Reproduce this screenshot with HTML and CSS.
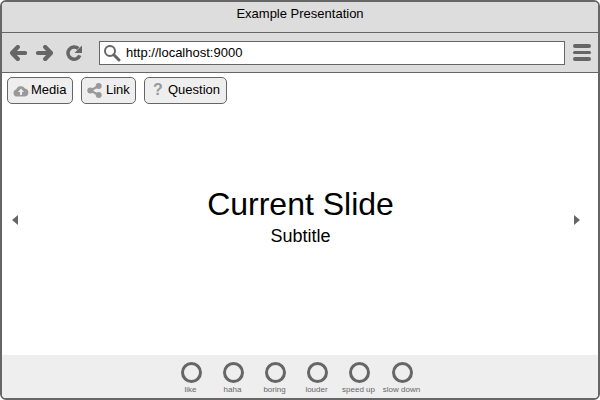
FILE: index.html
```html
<!DOCTYPE html>
<html lang="en">
<head>
  <meta charset="UTF-8" />
  <title>Example Presentation</title>
  <link rel="stylesheet" href="styles.css">
</head>
<body>

  <div class="window">
    <div class="titlebar">Example Presentation</div>

    <div class="toolbar">
      <svg class="nav-icon" width="17" height="16" viewBox="0 0 17 16">
        <path d="M7.8 2 2 8l5.8 6M2.5 8H15" fill="none" stroke="#666" stroke-width="4.2" stroke-linejoin="round" stroke-linecap="round"/>
      </svg>
      <svg class="nav-icon" width="17" height="16" viewBox="0 0 17 16">
        <path d="M9.2 2 15 8l-5.8 6M14.5 8H2" fill="none" stroke="#666" stroke-width="4.2" stroke-linejoin="round" stroke-linecap="round"/>
      </svg>
      <svg class="nav-icon reload" width="16" height="16" viewBox="0 0 16 16">
        <path d="M13.8 10.3A6.1 6.1 0 1 1 12.3 3.6" fill="none" stroke="#666" stroke-width="3.5"/>
        <path d="M16 0.5V8H8.5z" fill="#666"/>
      </svg>
      <div class="address">
        <svg width="18" height="18" viewBox="0 0 18 18">
          <circle cx="7" cy="7" r="5" fill="none" stroke="#666" stroke-width="2"/>
          <path d="M10.8 10.8 16 16" stroke="#666" stroke-width="3" stroke-linecap="round"/>
        </svg>
        <span>http://localhost:9000</span>
      </div>
      <div class="menu">
        <span></span>
        <span></span>
        <span></span>
      </div>
    </div>

    <div class="actions">
      <button class="media">
        <svg width="16" height="13" viewBox="0 0 16 13">
          <path d="M4 12.5a3.5 3.5 0 0 1-.8-6.9A4.8 4.8 0 0 1 12 4.6a4 4 0 0 1 0 7.9z" fill="#999"/>
          <path d="M8 4.5 11 8H9v3H7V8H5z" fill="#eee"/>
        </svg>
        <span>Media</span>
      </button>
      <button class="link">
        <svg width="15" height="15" viewBox="0 0 15 15">
          <path d="M11.5 3 3.5 7.5l8 4.5" fill="none" stroke="#999" stroke-width="2.2"/>
          <circle cx="11.7" cy="3" r="3" fill="#999"/>
          <circle cx="3.3" cy="7.5" r="3" fill="#999"/>
          <circle cx="11.7" cy="12" r="3" fill="#999"/>
        </svg>
        <span>Link</span>
      </button>
      <button class="question"><b>?</b><span>Question</span></button>
    </div>

    <div class="stage">
      <div class="arrow-left"></div>
      <div class="slide">
        <h1>Current Slide</h1>
        <h2>Subtitle</h2>
      </div>
      <div class="arrow-right"></div>
    </div>

    <div class="reactions">
      <div class="reaction"><i></i>like</div>
      <div class="reaction"><i></i>haha</div>
      <div class="reaction"><i></i>boring</div>
      <div class="reaction"><i></i>louder</div>
      <div class="reaction"><i></i>speed up</div>
      <div class="reaction last"><i></i>slow down</div>
    </div>
  </div>

</body>
</html>
```

FILE: styles.css
```css
html, body {
  margin: 0;
  padding: 0;
  background: #fff;
  font-family: 'Liberation Sans', Arial, sans-serif;
  overflow: hidden;
}

.window {
  width: 600px;
  height: 400px;
  box-sizing: border-box;
  border: 2px solid #666;
  border-radius: 6px;
  display: flex;
  flex-direction: column;
  overflow: hidden;
}

.titlebar {
  height: 30px;
  background: #ddd;
  border-bottom: 1px solid #666;
  line-height: 23px;
  text-align: center;
  font-size: 13px;
  color: #000;
}

.toolbar {
  height: 39px;
  background: #ddd;
  border-bottom: 1px solid #666;
  display: flex;
  align-items: center;
  padding-left: 8px;
}

.nav-icon {
  margin-right: 9px;
  flex: none;
}

.nav-icon.reload {
  margin-left: 4px;
  margin-right: 17px;
}

.address {
  width: 461px;
  height: 22px;
  background: #fff;
  border: 1px solid #666;
  display: flex;
  align-items: center;
  gap: 5px;
  padding-left: 3px;
  font-size: 13px;
  color: #000;
}

.menu {
  margin-left: 8px;
  display: flex;
  flex-direction: column;
  gap: 3px;
}

.menu span {
  display: block;
  width: 18px;
  height: 3.5px;
  border-radius: 2px;
  background: #666;
}

.actions {
  display: flex;
  gap: 8px;
  padding: 4px 5px 0;
  height: 27px;
}

button {
  height: 27px;
  box-sizing: border-box;
  background: #eee;
  border: 1px solid #666;
  border-radius: 5px;
  font-family: inherit;
  font-size: 13px;
  color: #000;
  display: flex;
  align-items: center;
  gap: 2px;
  padding: 0 5px 3px;
}

button svg {
  margin-top: 2px;
}

button b {
  color: #999;
  font-size: 16px;
  width: 16px;
  margin-top: 2px;
  text-align: center;
}

.media { width: 66px; }
.link { width: 55px; gap: 4px; }
.question { width: 83px; padding-left: 5px; }

.stage {
  flex: 1;
  display: grid;
  grid-template-columns: 1fr auto 1fr;
  align-items: center;
  padding: 0 18px 20px 10px;
  background: #fff;
}

.arrow-left {
  justify-self: start;
  border-style: solid;
  border-width: 5px 6px 5px 0;
  border-color: transparent #666 transparent transparent;
}

.arrow-right {
  justify-self: end;
  border-style: solid;
  border-width: 5px 0 5px 6px;
  border-color: transparent transparent transparent #666;
}

.slide {
  text-align: center;
  color: #000;
  margin-left: 9px;
  margin-bottom: 4px;
}

.slide h1 {
  margin: 0;
  font-size: 32px;
  font-weight: normal;
  line-height: 37px;
}

.slide h2 {
  margin: 0;
  font-size: 18px;
  font-weight: normal;
  line-height: 26px;
}

.reactions {
  height: 43px;
  background: #eee;
  display: flex;
  justify-content: center;
  padding-right: 6px;
}

.reaction {
  width: 42px;
  display: flex;
  flex-direction: column;
  align-items: center;
  font-size: 8px;
  color: #666;
  white-space: nowrap;
  padding: 7px 2px 0 0;
  box-sizing: border-box;
}

.reaction.last {
  margin-left: 1px;
}

.reaction i {
  display: block;
  width: 21px;
  height: 21px;
  box-sizing: border-box;
  border: 3px solid #666;
  border-radius: 50%;
  margin: 0 0 2px 2px;
}
```
